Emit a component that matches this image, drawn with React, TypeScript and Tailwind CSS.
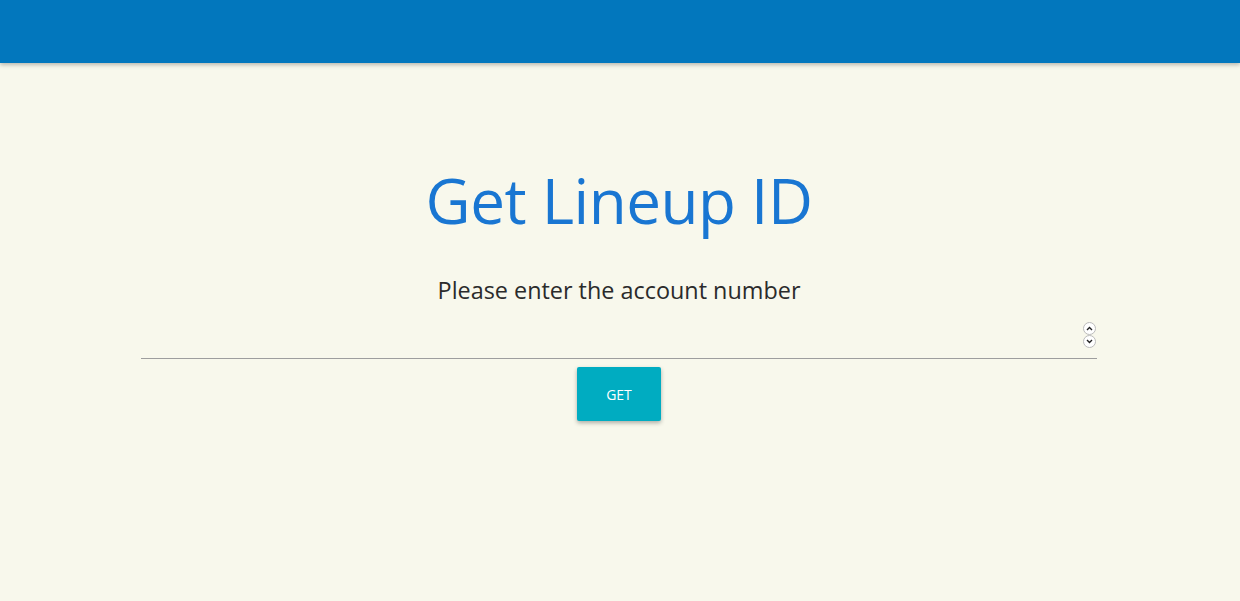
export default function App() {
  return (
    <div className="min-h-[601px] bg-[#f8f8ec] font-['Open_Sans',sans-serif]">
      <header className="h-[63px] bg-[#0277bd] shadow-[0_2px_4px_rgba(0,0,0,0.25)]" />
      <main className="flex flex-col items-center pl-[141px] pr-[143px] pt-[99px]">
        <h1 className="text-[62px] leading-[76px] font-normal tracking-[-0.5px] text-[#1976d2]">Get Lineup ID</h1>
        <p className="mt-[36px] text-[23.4px] leading-[32px] text-[#2b2b2b]">Please enter the account number</p>
        <div className="mt-[16px] flex h-[37px] w-full items-start justify-end border-b border-[#9e9e9e] pr-[1px]">
          <input type="text" className="h-full flex-1 bg-transparent outline-none" />
          <div className="flex flex-col">
            <span className="flex h-[13px] w-[13px] items-center justify-center rounded-full border border-[#bbb] bg-white">
              <svg width="7" height="5" viewBox="0 0 7 5"><path d="M1 4 L3.5 1.5 L6 4" fill="none" stroke="#222" strokeWidth="1.4" /></svg>
            </span>
            <span className="flex h-[13px] w-[13px] items-center justify-center rounded-full border border-[#bbb] bg-white">
              <svg width="7" height="5" viewBox="0 0 7 5"><path d="M1 1 L3.5 3.5 L6 1" fill="none" stroke="#222" strokeWidth="1.4" /></svg>
            </span>
          </div>
        </div>
        <button type="button" className="mt-[8px] h-[54px] w-[84px] rounded-[2px] bg-[#00acc1] text-[14px] text-white shadow-[0_2px_4px_rgba(0,0,0,0.3)]">
          GET
        </button>
      </main>
    </div>
  )
}
